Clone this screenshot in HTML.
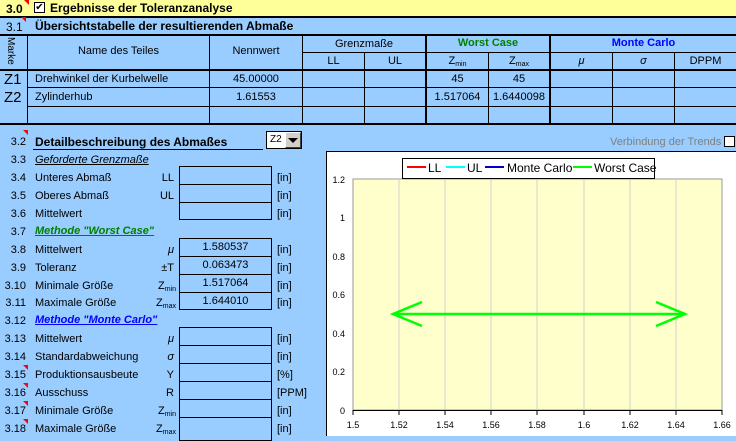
<!DOCTYPE html><html><head><style>
*{margin:0;padding:0;box-sizing:border-box}
body{width:736px;height:436px;overflow:hidden;background:#99ccff;font-family:"Liberation Sans",sans-serif;font-size:11px;color:#000;position:relative}
.a{position:absolute;white-space:nowrap}
.hl{position:absolute;background:#000}
.c{text-align:center}
.r{text-align:right}
.tri{position:absolute;width:0;height:0;border-top:5px solid red;border-left:5px solid transparent}
.box{position:absolute;left:179px;width:93px;border:1px solid #000;text-align:center;height:19px;line-height:17px}
sub{font-size:7px;vertical-align:-2px}
</style></head><body>
<div class="a" style="left:0;top:0;width:736px;height:16px;background:#ffff99"></div>
<div class="hl" style="left:0;top:16px;width:736px;height:2px"></div>
<div class="a" style="left:6px;top:2px;font-weight:bold;font-size:12px">3.0</div>
<div class="tri" style="left:24px;top:0"></div>
<div class="a" style="left:34px;top:2px;width:11px;height:11px;border:1px solid #000;background:#fff;font-size:10px;line-height:9px;text-align:center">✔</div>
<div class="a" style="left:50px;top:1px;font-weight:bold;font-size:12px">Ergebnisse der Toleranzanalyse</div>
<div class="a" style="left:6px;top:20px;font-size:12px">3.1</div>
<div class="tri" style="left:21px;top:17px"></div>
<div class="a" style="left:35px;top:19px;font-weight:bold;font-size:12px">Übersichtstabelle der resultierenden Abmaße</div>
<div class="hl" style="left:0;top:34px;width:736px;height:2px"></div>
<div class="hl" style="left:0;top:69px;width:736px;height:2px"></div>
<div class="hl" style="left:27px;top:87px;width:709px;height:1px"></div>
<div class="hl" style="left:27px;top:106px;width:709px;height:1px"></div>
<div class="hl" style="left:0;top:123px;width:736px;height:2px"></div>
<div class="hl" style="left:302px;top:52px;width:434px;height:1px"></div>
<div class="hl" style="left:27px;top:35px;width:1px;height:89px"></div>
<div class="hl" style="left:209px;top:35px;width:1px;height:89px"></div>
<div class="hl" style="left:302px;top:35px;width:1px;height:89px"></div>
<div class="hl" style="left:364px;top:52px;width:1px;height:72px"></div>
<div class="hl" style="left:425px;top:35px;width:2px;height:89px"></div>
<div class="hl" style="left:488px;top:52px;width:1px;height:72px"></div>
<div class="hl" style="left:549px;top:35px;width:2px;height:89px"></div>
<div class="hl" style="left:612px;top:52px;width:1px;height:72px"></div>
<div class="hl" style="left:674px;top:52px;width:1px;height:72px"></div>
<div class="a" style="left:5px;top:37px;font-size:10px;writing-mode:vertical-rl">Marke</div>
<div class="a c" style="left:28px;top:45px;width:181px">Name des Teiles</div>
<div class="a c" style="left:210px;top:45px;width:92px">Nennwert</div>
<div class="a c" style="left:303px;top:38px;width:122px">Grenzmaße</div>
<div class="a c" style="left:427px;top:37px;width:122px;color:#008000;font-weight:bold">Worst Case</div>
<div class="a c" style="left:551px;top:37px;width:185px;color:#0000ff;font-weight:bold">Monte Carlo</div>
<div class="a c" style="left:303px;top:55px;width:61px">LL</div>
<div class="a c" style="left:365px;top:55px;width:60px">UL</div>
<div class="a c" style="left:427px;top:55px;width:61px">Z<sub>min</sub></div>
<div class="a c" style="left:489px;top:55px;width:60px">Z<sub>max</sub></div>
<div class="a c" style="left:551px;top:55px;width:61px;font-style:italic">μ</div>
<div class="a c" style="left:613px;top:55px;width:61px;font-style:italic">σ</div>
<div class="a c" style="left:675px;top:55px;width:61px">DPPM</div>
<div class="a" style="left:4px;top:71px;font-size:15px">Z1</div>
<div class="a" style="left:4px;top:89px;font-size:15px">Z2</div>
<div class="a" style="left:35px;top:73px">Drehwinkel der Kurbelwelle</div>
<div class="a" style="left:35px;top:91px">Zylinderhub</div>
<div class="a c" style="left:210px;top:73px;width:92px">45.00000</div>
<div class="a c" style="left:210px;top:91px;width:92px">1.61553</div>
<div class="a c" style="left:427px;top:73px;width:61px">45</div>
<div class="a c" style="left:489px;top:73px;width:60px">45</div>
<div class="a c" style="left:427px;top:91px;width:61px">1.517064</div>
<div class="a c" style="left:489px;top:91px;width:60px">1.6440098</div>
<div class="a r" style="left:0;top:136px;width:26px">3.2</div>
<div class="tri" style="left:23px;top:130px"></div>
<div class="a" style="left:35px;top:135px;font-weight:bold;font-size:12px">Detailbeschreibung des Abmaßes</div>
<div class="hl" style="left:33px;top:149px;width:230px;height:1px"></div>
<div class="a" style="left:266px;top:131px;width:36px;height:18px;background:#fff;border:1px solid #000;font-size:10px;line-height:16px;padding-left:3px">Z2</div>
<div class="a" style="left:285px;top:132px;width:16px;height:16px;background:#d4d0c8;border:1px solid #fff;border-right-color:#404040;border-bottom-color:#404040"></div>
<div class="a" style="left:288px;top:138px;width:0;height:0;border-left:5px solid transparent;border-right:5px solid transparent;border-top:5px solid #000"></div>
<div class="a" style="left:610px;top:136px;color:#808080">Verbindung der Trends</div>
<div class="a" style="left:724px;top:136px;width:11px;height:11px;border:1px solid #000;background:#fff"></div>
<div class="a r" style="left:0;top:154px;width:26px">3.3</div>
<div class="a" style="left:35px;top:154px;font-style:italic;text-decoration:underline">Geforderte Grenzmaße</div>
<div class="a r" style="left:0;top:172px;width:26px">3.4</div><div class="a" style="left:35px;top:172px">Unteres Abmaß</div><div class="a r" style="left:140px;top:172px;width:34px">LL</div>
<div class="a r" style="left:0;top:190px;width:26px">3.5</div><div class="a" style="left:35px;top:190px">Oberes Abmaß</div><div class="a r" style="left:140px;top:190px;width:34px">UL</div>
<div class="a r" style="left:0;top:208px;width:26px">3.6</div><div class="a" style="left:35px;top:208px">Mittelwert</div>
<div class="box" style="top:166px"></div><div class="box" style="top:184px"></div><div class="box" style="top:202px;height:18px"></div>
<div class="a" style="left:277px;top:172px">[in]</div><div class="a" style="left:277px;top:190px">[in]</div><div class="a" style="left:277px;top:208px">[in]</div>
<div class="a r" style="left:0;top:226px;width:26px">3.7</div>
<div class="a" style="left:35px;top:225px;font-style:italic;font-weight:bold;text-decoration:underline;color:#008000">Methode "Worst Case"</div>
<div class="a r" style="left:0;top:244px;width:26px">3.8</div><div class="a" style="left:35px;top:244px">Mittelwert</div><div class="a r" style="left:140px;top:244px;width:34px;font-style:italic">μ</div>
<div class="a r" style="left:0;top:262px;width:26px">3.9</div><div class="a" style="left:35px;top:262px">Toleranz</div><div class="a r" style="left:140px;top:262px;width:34px">±T</div>
<div class="a r" style="left:0;top:280px;width:26px">3.10</div><div class="a" style="left:35px;top:280px">Minimale Größe</div><div class="a r" style="left:140px;top:280px;width:36px">Z<sub>min</sub></div>
<div class="a r" style="left:0;top:297px;width:26px">3.11</div><div class="a" style="left:35px;top:297px">Maximale Größe</div><div class="a r" style="left:140px;top:297px;width:36px">Z<sub>max</sub></div>
<div class="box" style="top:238px">1.580537</div><div class="box" style="top:256px">0.063473</div><div class="box" style="top:274px">1.517064</div><div class="box" style="top:292px;height:18px;line-height:16px">1.644010</div>
<div class="a" style="left:277px;top:244px">[in]</div><div class="a" style="left:277px;top:262px">[in]</div><div class="a" style="left:277px;top:280px">[in]</div><div class="a" style="left:277px;top:297px">[in]</div>
<div class="a r" style="left:0;top:315px;width:26px">3.12</div>
<div class="a" style="left:35px;top:314px;font-style:italic;font-weight:bold;text-decoration:underline;color:#0000ff">Methode "Monte Carlo"</div>
<div class="a r" style="left:0;top:333px;width:26px">3.13</div><div class="a" style="left:35px;top:333px">Mittelwert</div><div class="a r" style="left:140px;top:333px;width:34px;font-style:italic">μ</div>
<div class="a r" style="left:0;top:351px;width:26px">3.14</div><div class="a" style="left:35px;top:351px">Standardabweichung</div><div class="a r" style="left:140px;top:351px;width:34px;font-style:italic">σ</div>
<div class="a r" style="left:0;top:369px;width:26px">3.15</div><div class="a" style="left:35px;top:369px">Produktionsausbeute</div><div class="a r" style="left:140px;top:369px;width:34px">Y</div>
<div class="a r" style="left:0;top:387px;width:26px">3.16</div><div class="a" style="left:35px;top:387px">Ausschuss</div><div class="a r" style="left:140px;top:387px;width:34px">R</div>
<div class="a r" style="left:0;top:405px;width:26px">3.17</div><div class="a" style="left:35px;top:405px">Minimale Größe</div><div class="a r" style="left:140px;top:405px;width:36px">Z<sub>min</sub></div>
<div class="a r" style="left:0;top:423px;width:26px">3.18</div><div class="a" style="left:35px;top:423px">Maximale Größe</div><div class="a r" style="left:140px;top:423px;width:36px">Z<sub>max</sub></div>
<div class="tri" style="left:23px;top:365px"></div><div class="tri" style="left:23px;top:383px"></div><div class="tri" style="left:23px;top:401px"></div><div class="tri" style="left:23px;top:419px"></div>
<div class="box" style="top:327px"></div><div class="box" style="top:345px"></div><div class="box" style="top:363px"></div><div class="box" style="top:381px"></div><div class="box" style="top:399px"></div><div class="box" style="top:417px;height:24px"></div>
<div class="a" style="left:277px;top:333px">[in]</div><div class="a" style="left:277px;top:351px">[in]</div><div class="a" style="left:277px;top:369px">[%]</div><div class="a" style="left:277px;top:387px">[PPM]</div><div class="a" style="left:277px;top:405px">[in]</div><div class="a" style="left:277px;top:423px">[in]</div>
<svg class="a" style="left:326px;top:151px" width="410" height="285" viewBox="326 151 410 285" font-family="Liberation Sans,sans-serif" font-size="9">
<rect x="326.5" y="151.5" width="412" height="290" fill="#fff" stroke="#000"/>
<rect x="353" y="179" width="369" height="231" fill="#ffffcc" stroke="#999"/>
<g stroke="#d0d0d0">
<line x1="399" y1="179" x2="399" y2="410"/><line x1="445" y1="179" x2="445" y2="410"/><line x1="491" y1="179" x2="491" y2="410"/><line x1="537" y1="179" x2="537" y2="410"/><line x1="584" y1="179" x2="584" y2="410"/><line x1="630" y1="179" x2="630" y2="410"/><line x1="676" y1="179" x2="676" y2="410"/>
</g>
<line x1="353" y1="410.5" x2="722" y2="410.5" stroke="#000"/>
<g stroke="#000"><line x1="353" y1="410" x2="353" y2="415"/><line x1="399" y1="410" x2="399" y2="415"/><line x1="445" y1="410" x2="445" y2="415"/><line x1="491" y1="410" x2="491" y2="415"/><line x1="537" y1="410" x2="537" y2="415"/><line x1="584" y1="410" x2="584" y2="415"/><line x1="630" y1="410" x2="630" y2="415"/><line x1="676" y1="410" x2="676" y2="415"/><line x1="722" y1="410" x2="722" y2="415"/></g>
<g text-anchor="middle"><text x="353" y="428">1.5</text><text x="399" y="428">1.52</text><text x="445" y="428">1.54</text><text x="491" y="428">1.56</text><text x="537" y="428">1.58</text><text x="584" y="428">1.6</text><text x="630" y="428">1.62</text><text x="676" y="428">1.64</text><text x="722" y="428">1.66</text></g>
<g text-anchor="end"><text x="345" y="183">1.2</text><text x="345" y="221">1</text><text x="345" y="260">0.8</text><text x="345" y="298">0.6</text><text x="345" y="337">0.4</text><text x="345" y="375">0.2</text><text x="345" y="414">0</text></g>
<g stroke="#00ff00" stroke-width="2.5" fill="none"><line x1="393" y1="314" x2="684" y2="314"/><polyline points="422,302 393,314 422,326"/><polyline points="656,302 685,314 656,326"/></g>
<rect x="402.5" y="158.5" width="252" height="20" fill="#fff" stroke="#000"/>
<g stroke-width="2"><line x1="407" y1="167" x2="426" y2="167" stroke="#f00"/><line x1="446" y1="167" x2="465" y2="167" stroke="#0ff"/><line x1="485" y1="167" x2="504" y2="167" stroke="#00c"/><line x1="573" y1="167" x2="592" y2="167" stroke="#0f0"/></g>
<g font-size="12"><text x="428" y="172">LL</text><text x="467" y="172">UL</text><text x="507" y="172">Monte Carlo</text><text x="594" y="172">Worst Case</text></g>
</svg>
</body></html>
